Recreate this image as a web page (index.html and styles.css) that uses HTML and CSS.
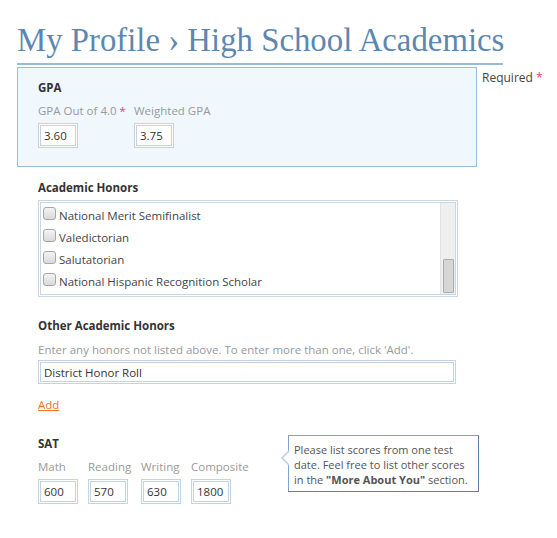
FILE: index.html
```html
<!DOCTYPE html>
<html>
<head>
<meta charset="utf-8">
<link rel="stylesheet" href="styles.css">
</head>
<body>
<div class="page">
  <h1 class="title">My Profile › High School Academics</h1>
  <div class="top-row">
    <div class="panel">
      <div class="section-label">GPA</div>
      <div class="fields">
        <div class="field f-gpa">
          <div class="field-label">GPA Out of 4.0 <span class="req">*</span></div>
          <div class="input w40">3.60</div>
        </div>
        <div class="field">
          <div class="field-label">Weighted GPA</div>
          <div class="input w40">3.75</div>
        </div>
      </div>
    </div>
    <div class="required">Required <span class="req">*</span></div>
  </div>

  <div class="body">
    <div class="section-label mt-honors">Academic Honors</div>
    <div class="listbox">
      <div class="options">
        <div class="option"><span class="cb"></span>National Merit Semifinalist</div>
        <div class="option"><span class="cb"></span>Valedictorian</div>
        <div class="option"><span class="cb"></span>Salutatorian</div>
        <div class="option"><span class="cb"></span>National Hispanic Recognition Scholar</div>
      </div>
      <div class="scrollbar"><div class="thumb"></div></div>
    </div>

    <div class="section-label mt-other">Other Academic Honors</div>
    <div class="hint">Enter any honors not listed above. To enter more than one, click 'Add'.</div>
    <div class="input wide">District Honor Roll</div>
    <a class="add" href="#">Add</a>

    <div class="sat-row">
      <div class="sat">
        <div class="section-label">SAT</div>
        <div class="fields sat-fields">
          <div class="field f-math">
            <div class="field-label">Math</div>
            <div class="input w40">600</div>
          </div>
          <div class="field f-reading">
            <div class="field-label">Reading</div>
            <div class="input w40">570</div>
          </div>
          <div class="field f-writing">
            <div class="field-label">Writing</div>
            <div class="input w40">630</div>
          </div>
          <div class="field">
            <div class="field-label">Composite</div>
            <div class="input w40">1800</div>
          </div>
        </div>
      </div>
      <div class="tip">Please list scores from one test date. Feel free to list other scores in the <b>"More About You"</b> section.</div>
    </div>
  </div>
</div>
</body>
</html>
```

FILE: styles.css
```css
* { box-sizing: border-box; }
html, body { margin: 0; padding: 0; background: #fff; }
body {
  font-family: "Open Sans", "Noto Sans", sans-serif;
  font-size: 11.5px;
  color: #444;
}
.page { padding: 0 0 0 17px; }
.title {
  margin: 0;
  width: 486px;
  padding-top: 20px;
  font-family: "Liberation Serif", "Times New Roman", serif;
  font-weight: normal;
  font-size: 32.8px;
  line-height: 40px;
  color: #5d87b1;
  white-space: nowrap;
  border-bottom: 2px solid #9bbad6;
  box-sizing: content-box;
  height: 43px;
}
.top-row { display: flex; margin-top: 2px; }
.panel {
  width: 460px;
  height: 100px;
  background: #f0f7fd;
  border: 1px solid #9dbcd7;
  padding: 12px 0 0 20px;
}
.required { margin-left: 5px; padding-top: 3px; color: #444; line-height: 16px; font-size: 12px; }
.req { color: #e0446f; }
.section-label { font-weight: bold; color: #333; line-height: 16px; }
.fields { display: flex; margin-top: 7px; }
.field { margin-right: 10px; }
.field-label { color: #999; line-height: 16px; height: 18px; margin-bottom: 2px; white-space: nowrap; }
.f-gpa { width: 86px; }
.input {
  height: 25px;
  border: 3px double #c3d3e1;
  padding: 0 3px;
  line-height: 19px;
  color: #333;
  background: #fff;
}
.w40 { width: 40px; }
.body { padding-left: 21px; }
.mt-honors { margin-top: 13px; }
.listbox {
  position: relative;
  margin-top: 4px;
  width: 420px;
  height: 97px;
  border: 3px double #c9d7e3;
  display: flex;
}
.options { flex: 1; padding: 1px 0 0 2px; }
.option { display: flex; align-items: center; height: 22px; color: #444; }
.cb {
  width: 13px; height: 13px;
  border: 1px solid #a6a6a6;
  border-radius: 3px;
  background: linear-gradient(#f4f4f4, #d9d9d9);
  margin-right: 3px;
  margin-top: -4px;
}
.scrollbar {
  width: 15px;
  background: #efefef;
  border-left: 1px solid #e2e2e2;
  position: relative;
}
.thumb {
  position: absolute;
  left: 2px; right: 1px;
  bottom: 1px;
  height: 34px;
  background: #d6d6d6;
  border: 1px solid #acacac;
  border-radius: 1px;
}
.mt-other { margin-top: 21px; }
.hint { color: #999; margin-top: 8px; line-height: 16px; }
.wide { width: 418px; margin-top: 2px; height: 24px; }
.add {
  display: inline-block;
  margin-top: 13px;
  color: #f0711f;
  text-decoration: underline;
  line-height: 16px;
}
.sat-row { display: flex; margin-top: 23px; }
.sat { width: 250px; }
.sat-fields { margin-top: 7px; }
.f-math { width: 40px; margin-right: 10px; }
.f-reading { width: 43px; margin-right: 10px; }
.f-writing { width: 40px; margin-right: 10px; }
.tip {
  position: relative;
  margin-top: -1px;
  width: 191px;
  height: 57px;
  border: 1px solid #7ea3c6;
  border-right-color: #5b7fa3;
  border-bottom-color: #5b7fa3;
  padding: 6px 4px 0 5px;
  font-size: 11px;
  line-height: 15px;
  color: #555;
  background: #fff;
}
.tip b { color: #555; }
.tip::before {
  content: "";
  position: absolute;
  left: -8px; top: 14px;
  border: 8px solid transparent;
  border-left: 0;
  border-right-color: #b9cde0;
}
.tip::after {
  content: "";
  position: absolute;
  left: -6px; top: 15px;
  border: 7px solid transparent;
  border-left: 0;
  border-right-color: #fff;
}
```
